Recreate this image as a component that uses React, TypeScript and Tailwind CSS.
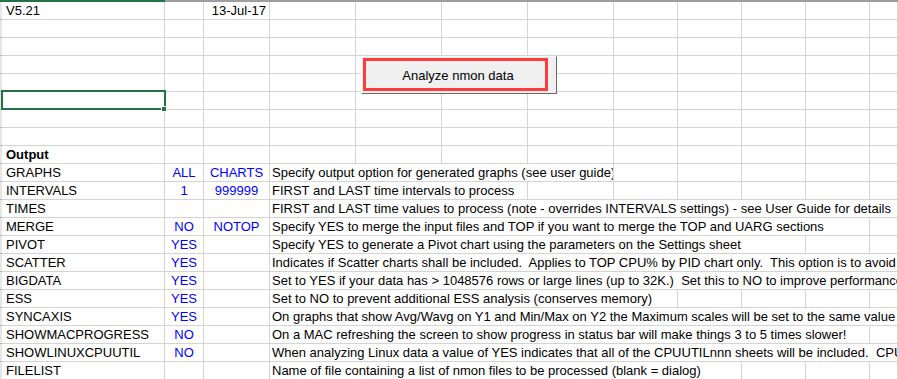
import React from "react";

type Row = {
  a?: string;
  b?: string;
  c?: string;
  d?: string;
  span?: number; // columns from D covered by the description
  bold?: boolean;
  cRight?: boolean;
  selected?: boolean;
};

// widths of the columns after C (D..K), L takes what is left
const restCols = [86, 86, 86, 86, 64, 64, 64, 64];

const rows: Row[] = [
  { a: "V5.21", c: "13-Jul-17", cRight: true },
  {},
  {},
  {},
  {},
  { selected: true },
  {},
  {},
  { a: "Output", bold: true },
  { a: "GRAPHS", b: "ALL", c: "CHARTS", d: "Specify output option for generated graphs (see user guide)", span: 4 },
  { a: "INTERVALS", b: "1", c: "999999", d: "FIRST and LAST time intervals to process", span: 3 },
  { a: "TIMES", d: "FIRST and LAST time values to process (note - overrides INTERVALS settings) - see User Guide for details", span: 9 },
  { a: "MERGE", b: "NO", c: "NOTOP", d: "Specify YES to merge the input files and TOP if you want to merge the TOP and UARG sections", span: 8 },
  { a: "PIVOT", b: "YES", d: "Specify YES to generate a Pivot chart using the parameters on the Settings sheet", span: 7 },
  { a: "SCATTER", b: "YES", d: "Indicates if Scatter charts shall be included.  Applies to TOP CPU% by PID chart only.  This option is to avoid", span: 9 },
  { a: "BIGDATA", b: "YES", d: "Set to YES if your data has > 1048576 rows or large lines (up to 32K.)  Set this to NO to improve performance", span: 9 },
  { a: "ESS", b: "YES", d: "Set to NO to prevent additional ESS analysis (conserves memory)", span: 5 },
  { a: "SYNCAXIS", b: "YES", d: "On graphs that show Avg/Wavg on Y1 and Min/Max on Y2 the Maximum scales will be set to the same value", span: 9 },
  { a: "SHOWMACPROGRESS", b: "NO", d: "On a MAC refreshing the screen to show progress in status bar will make things 3 to 5 times slower!", span: 8 },
  { a: "SHOWLINUXCPUUTIL", b: "NO", d: "When analyzing Linux data a value of YES indicates that all of the CPUUTILnnn sheets will be included.  CPU", span: 9 },
  { a: "FILELIST", d: "Name of file containing a list of nmon files to be processed (blank = dialog)", span: 6 },
];

const cell = "h-[18px] shrink-0 border-r border-b border-[#d4d4d4] overflow-hidden whitespace-pre text-[13px] leading-[18px]";

function SheetRow({ row }: { row: Row }) {
  const span = row.span ?? 0;
  const descWidth = restCols.slice(0, span).reduce((s, w) => s + w, 0);
  const fillsToEnd = span >= 9;
  const remaining = span > 0 ? restCols.slice(span) : restCols;

  return (
    <div className="flex">
      <div className="h-[18px] w-[2px] shrink-0 bg-[#e6e6e6] border-b border-[#b4b4b4]" />
      <div className={`${cell} relative w-[163px] pl-[4px] ${row.bold ? "font-bold" : ""} overflow-visible`}>
        {row.a}
        {row.selected && (
          <>
            <div className="absolute left-[-1px] top-[-2px] w-[165px] h-[20px] border-2 border-[#217346] z-10" />
            <div className="absolute left-[159px] top-[14px] w-[6px] h-[6px] bg-[#217346] border border-white z-20" />
          </>
        )}
      </div>
      <div className={`${cell} w-[39px] text-center text-[#0000ff]`}>{row.b}</div>
      <div className={`${cell} w-[66px] ${row.cRight ? "text-right pr-[3px] text-black" : "text-center text-[#0000ff]"}`}>{row.c}</div>
      {span > 0 &&
        (fillsToEnd ? (
          <div className={`${cell} flex-1 min-w-0 pl-[2px]`}>{row.d}</div>
        ) : (
          <div className={`${cell} pl-[2px]`} style={{ width: descWidth }}>
            {row.d}
          </div>
        ))}
      {!fillsToEnd &&
        remaining.map((w, i) => (
          <div key={i} className={cell} style={{ width: w }} />
        ))}
      {!fillsToEnd && <div className={`${cell} flex-1 min-w-0`} />}
    </div>
  );
}

export default function App() {
  return (
    <div
      className="relative w-[898px] h-[379px] overflow-hidden bg-white text-black"
      style={{ fontFamily: '"Liberation Sans", Arial, sans-serif' }}
    >
      {/* column header bottom edge */}
      <div className="flex h-[2px]">
        <div className="w-[165px] shrink-0 bg-[#217346]" />
        <div className="flex-1 bg-[#9e9e9e]" />
      </div>

      {rows.map((row, i) => (
        <SheetRow key={i} row={row} />
      ))}

      {/* form button floating over the sheet */}
      <div className="absolute left-[361px] top-[56px] w-[196px] h-[38px] bg-[#f0f0f0] border-t border-l border-white border-r border-b border-r-[#696969] border-b-[#696969] flex items-center justify-center z-30">
        <div className="absolute left-[1px] top-[1px] w-[185px] h-[33px] border-[3px] border-[#ff3b3b]" />
        <span className="relative text-[13px] leading-none pr-[2px]">Analyze nmon data</span>
      </div>
    </div>
  );
}
